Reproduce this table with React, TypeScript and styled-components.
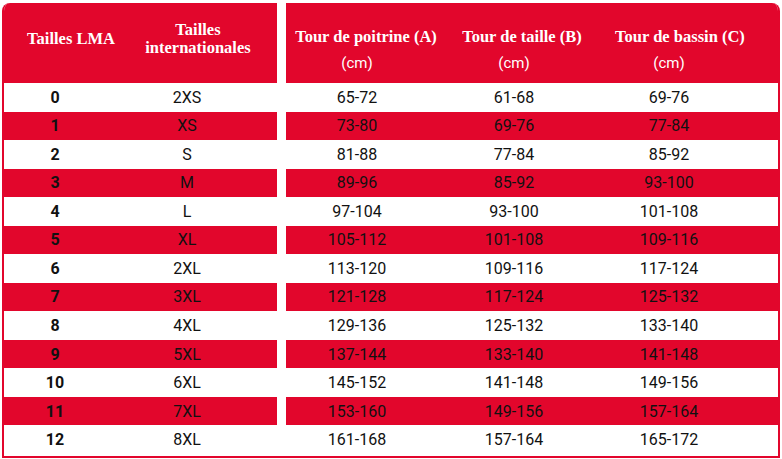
import React from 'react';
import styled, { createGlobalStyle } from 'styled-components';

const RED = '#e2062c';

const GlobalStyle = createGlobalStyle`
  html, body {
    margin: 0;
    padding: 0;
    background: #ffffff;
  }
  body {
    font-family: Roboto, "Liberation Sans", sans-serif;
  }
`;

interface Col {
  width: number;
  bodyPr?: number;
  titlePl?: number;
  titlePr?: number;
}

const leftCols: Col[] = [
  { width: 102, titlePl: 32 },
  { width: 171, bodyPr: 9, titlePl: 13 },
];

const rightCols: Col[] = [
  { width: 142, titlePl: 18 },
  { width: 172, titlePl: 16 },
  { width: 178, bodyPr: 40, titlePr: 18 },
];

const rows = [
  ['0', '2XS', '65-72', '61-68', '69-76'],
  ['1', 'XS', '73-80', '69-76', '77-84'],
  ['2', 'S', '81-88', '77-84', '85-92'],
  ['3', 'M', '89-96', '85-92', '93-100'],
  ['4', 'L', '97-104', '93-100', '101-108'],
  ['5', 'XL', '105-112', '101-108', '109-116'],
  ['6', '2XL', '113-120', '109-116', '117-124'],
  ['7', '3XL', '121-128', '117-124', '125-132'],
  ['8', '4XL', '129-136', '125-132', '133-140'],
  ['9', '5XL', '137-144', '133-140', '141-148'],
  ['10', '6XL', '145-152', '141-148', '149-156'],
  ['11', '7XL', '153-160', '149-156', '157-164'],
  ['12', '8XL', '161-168', '157-164', '165-172'],
];

const Frame = styled.div`
  margin: 3px 0 0 2px;
  width: 778px;
  height: 455px;
  box-sizing: border-box;
  border: 2px solid ${RED};
  border-top: none;
  border-radius: 8px 8px 0 0;
  overflow: hidden;
  display: flex;
  flex-direction: column;
`;

const Band = styled.div<{ $height: number }>`
  display: flex;
  gap: 9px;
  height: ${({ $height }) => $height}px;
  flex-shrink: 0;
`;

const Segment = styled.div<{ $red: boolean; $grow?: boolean }>`
  display: flex;
  flex: ${({ $grow }) => ($grow ? 1 : '0 0 auto')};
  background: ${({ $red }) => ($red ? RED : '#ffffff')};
`;

const HeadCell = styled.div<{ $width: number }>`
  width: ${({ $width }) => $width}px;
  box-sizing: border-box;
  display: flex;
  flex-direction: column;
  align-items: center;
  color: #ffffff;
`;

const HeadTitle = styled.div<{ $pl?: number; $pr?: number }>`
  font-family: "Liberation Serif", serif;
  font-weight: 700;
  font-size: 16.5px;
  line-height: 18px;
  text-align: center;
  white-space: nowrap;
  padding-left: ${({ $pl }) => $pl ?? 0}px;
  padding-right: ${({ $pr }) => $pr ?? 0}px;
`;

const LeftHead = styled(HeadCell)`
  justify-content: center;
  padding-bottom: 8px;
`;

const RightHead = styled(HeadCell)`
  padding-top: 25px;
`;

const Unit = styled.div<{ $pr?: number }>`
  font-family: Roboto, "Liberation Sans", sans-serif;
  font-size: 15px;
  line-height: 18px;
  margin-top: 8px;
  padding-right: ${({ $pr }) => $pr ?? 0}px;
`;

const BodyCell = styled.div<{ $width: number; $pr?: number; $bold?: boolean }>`
  width: ${({ $width }) => $width}px;
  box-sizing: border-box;
  padding-right: ${({ $pr }) => $pr ?? 0}px;
  display: flex;
  align-items: center;
  justify-content: center;
  font-family: Roboto, "Liberation Sans", sans-serif;
  font-size: 16px;
  font-weight: ${({ $bold }) => ($bold ? 700 : 400)};
  color: #111111;
`;

export default function App() {
  return (
    <>
      <GlobalStyle />
      <Frame>
        <Band $height={80}>
          <Segment $red>
            <LeftHead $width={leftCols[0].width}>
              <HeadTitle $pl={leftCols[0].titlePl}>Tailles LMA</HeadTitle>
            </LeftHead>
            <LeftHead $width={leftCols[1].width}>
              <HeadTitle $pl={leftCols[1].titlePl}>
                Tailles
                <br />
                internationales
              </HeadTitle>
            </LeftHead>
          </Segment>
          <Segment $red $grow>
            {['Tour de poitrine (A)', 'Tour de taille (B)', 'Tour de bassin (C)'].map((t, i) => (
              <RightHead key={t} $width={rightCols[i].width}>
                <HeadTitle $pl={rightCols[i].titlePl} $pr={rightCols[i].titlePr}>
                  {t}
                </HeadTitle>
                <Unit $pr={rightCols[i].bodyPr}>(cm)</Unit>
              </RightHead>
            ))}
          </Segment>
        </Band>
        {rows.map((r, idx) => {
          const red = idx % 2 === 1;
          return (
            <Band key={r[0]} $height={28.54}>
              <Segment $red={red}>
                <BodyCell $width={leftCols[0].width} $bold>
                  {r[0]}
                </BodyCell>
                <BodyCell $width={leftCols[1].width} $pr={leftCols[1].bodyPr}>
                  {r[1]}
                </BodyCell>
              </Segment>
              <Segment $red={red} $grow>
                {r.slice(2).map((v, i) => (
                  <BodyCell key={i} $width={rightCols[i].width} $pr={rightCols[i].bodyPr}>
                    {v}
                  </BodyCell>
                ))}
              </Segment>
            </Band>
          );
        })}
      </Frame>
    </>
  );
}
